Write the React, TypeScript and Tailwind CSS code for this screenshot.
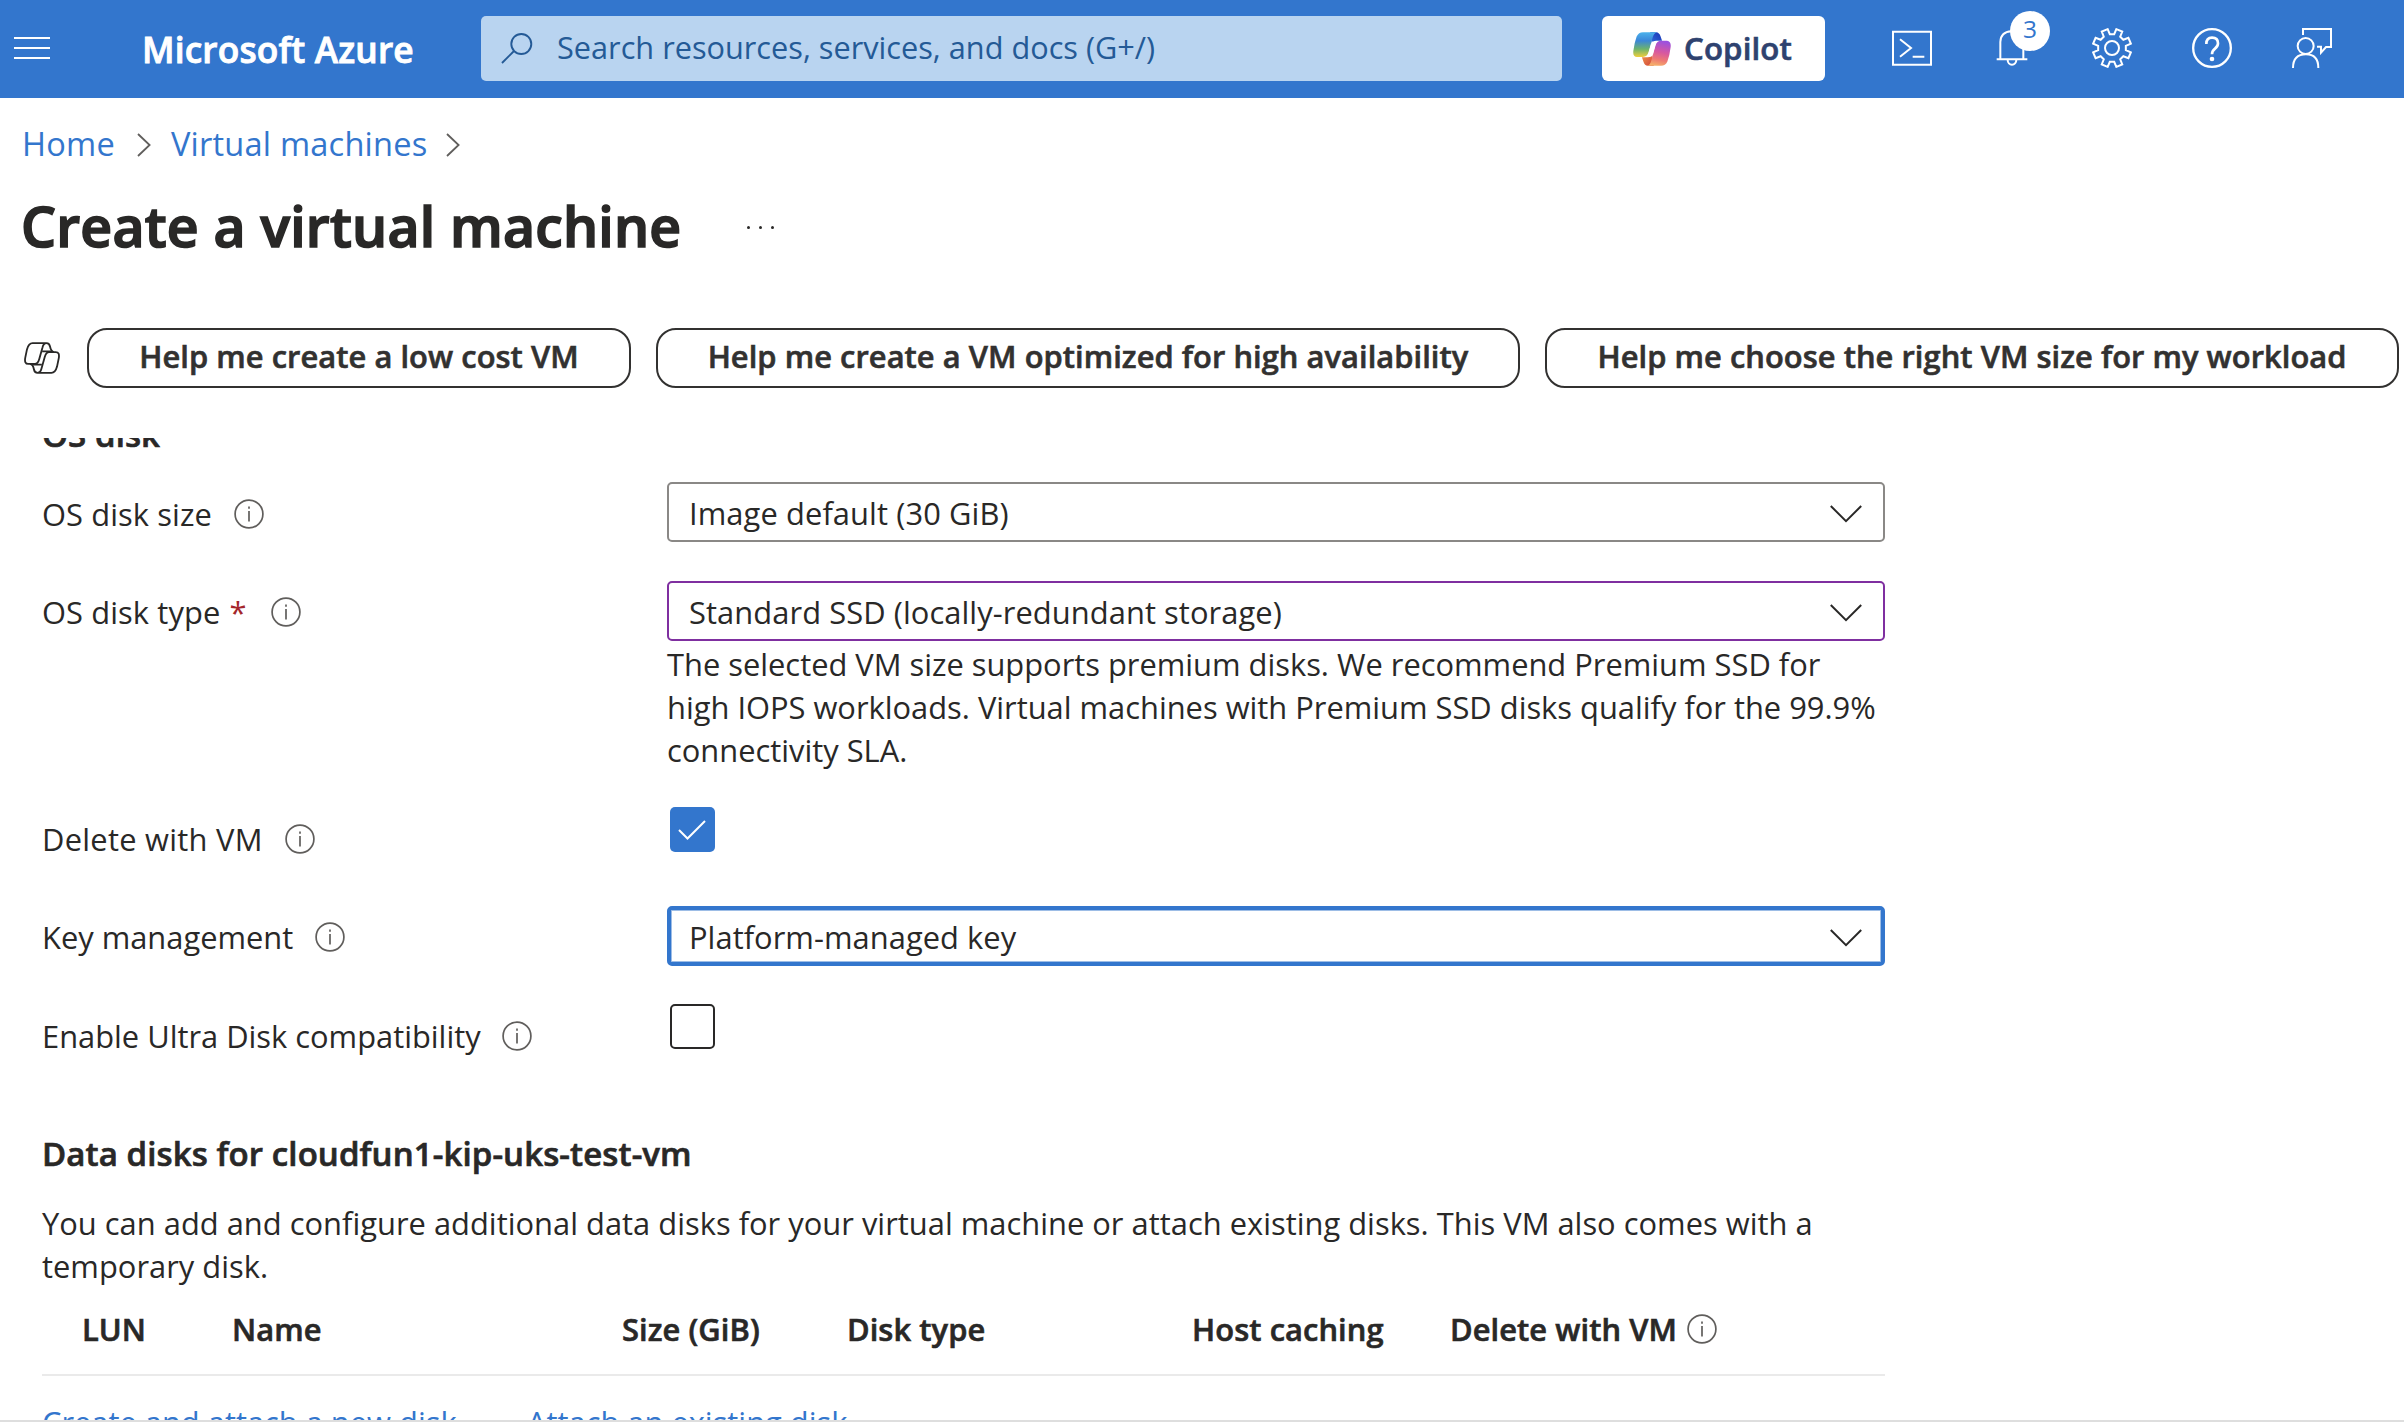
import type { ReactNode } from "react";

const gearPath = (() => {
  const point = (deg: number, r: number) => {
    const a = ((deg - 90) * Math.PI) / 180;
    return `${(60 + r * Math.cos(a)).toFixed(1)} ${(60 + r * Math.sin(a)).toFixed(1)}`;
  };
  const parts: string[] = [];
  for (let k = 0; k < 8; k++) {
    const a = k * 45;
    parts.push(point(a - 13, 58), point(a - 9, 42), point(a + 9, 42), point(a + 13, 58));
  }
  return `M${parts.join("L")}Z`;
})();

function HeaderIcon({ children }: { children: ReactNode }) {
  return (
    <button className="relative mt-3 flex h-10 w-[100px] shrink-0 justify-center">
      {children}
    </button>
  );
}

function Glyph({ children }: { children: ReactNode }) {
  return (
    <svg className="size-10" viewBox="0 0 120 120" fill="none" stroke="#fff" strokeWidth="6">
      {children}
    </svg>
  );
}

function CopilotLogo() {
  return (
    <svg className="h-[34px] w-[38px]" viewBox="98 63 115 102">
      <defs>
        <linearGradient id="cpLeft" x1="0" y1="0" x2="0" y2="1">
          <stop offset="0" stopColor="#4cb3ec" />
          <stop offset="0.35" stopColor="#3b86d8" />
          <stop offset="0.68" stopColor="#6db36c" />
          <stop offset="1" stopColor="#efcf3c" />
        </linearGradient>
        <linearGradient id="cpRight" x1="0.6" y1="0" x2="0.4" y2="1">
          <stop offset="0" stopColor="#9a51e0" />
          <stop offset="0.45" stopColor="#d8589f" />
          <stop offset="0.75" stopColor="#ee7a73" />
          <stop offset="1" stopColor="#f5b06a" />
        </linearGradient>
        <linearGradient id="cpTop" x1="0" y1="1" x2="1" y2="0">
          <stop offset="0" stopColor="#2f6fdc" />
          <stop offset="1" stopColor="#1a32b4" />
        </linearGradient>
        <linearGradient id="cpBottom" x1="0" y1="0" x2="1" y2="1">
          <stop offset="0" stopColor="#f0984a" />
          <stop offset="1" stopColor="#cf3f3a" />
        </linearGradient>
      </defs>
      <path d="M150 63H168Q178 64 181 75L186 89H168Q158 90 155 99Z" fill="url(#cpTop)" />
      <path d="M161 165H143Q133 164 130 153L125 139H143Q153 138 156 129Z" fill="url(#cpBottom)" />
      <path d="M128 63H170Q161 66 158 78L145 124Q141 138 128 138H110Q97 137 99 120Q102 95 109 76Q115 63 128 63Z" fill="url(#cpLeft)" />
      <path d="M183 165H141Q150 162 153 150L166 104Q170 89 183 89H201Q214 91 212 108Q209 133 202 152Q196 165 183 165Z" fill="url(#cpRight)" />
      <path d="M156 91H171Q167 95 165 104L157 133Q155 138 148 138H140Q143 133 145 126L153 98Z" fill="#fff" />
    </svg>
  );
}

function CopilotOutline() {
  return (
    <svg className="h-8 w-9 shrink-0" viewBox="42 66 109 96" fill="none" stroke="#292827" strokeWidth="5.5">
      <path d="M110 69H68Q56 69 51 88L46 112Q42 132 55 132H75Q84 132 88 118L98 82Q101 69 110 69Q119 69 121 80Q124 95 133 96" />
      <path d="M83 159H125Q137 159 142 140L147 116Q151 96 138 96H118Q109 96 105 110L95 146Q92 159 83 159Q74 159 72 148Q69 133 60 132" />
      <path d="M97 94H126M67 134H96" />
    </svg>
  );
}

function Info() {
  return (
    <svg className="size-[30px] shrink-0" viewBox="0 0 30 30" fill="none" stroke="#605e5c" strokeWidth="1.7">
      <circle cx="15" cy="15" r="13.9" />
      <path d="M15 12v10.5M15 7.6v2.2" />
    </svg>
  );
}

function Crumb() {
  return (
    <svg className="mt-0.5 h-6 w-3.5 shrink-0" viewBox="0 0 14 24" fill="none" stroke="#605e5c" strokeWidth="1.8">
      <path d="M1 1L12.6 12L1 23" />
    </svg>
  );
}

function Select({ value, tone }: { value: string; tone: string }) {
  return (
    <div className={`flex h-[60px] w-[1218px] items-center justify-between rounded-[5px] ${tone}`}>
      <span className="pt-0.5">{value}</span>
      <svg className="mt-[3px] h-[18px] w-8" viewBox="0 0 32 18" fill="none" stroke="#292827" strokeWidth="2">
        <path d="M0.8 1L16 16.2L31.2 1" />
      </svg>
    </div>
  );
}

function Row({ label, required, offset, className, children }: {
  label: string;
  required?: boolean;
  offset: string;
  className: string;
  children: ReactNode;
}) {
  return (
    <div className={`flex shrink-0 items-start ${className}`}>
      <div className={`flex w-[625px] shrink-0 items-center leading-[44px] ${offset}`}>
        <span>
          {label}
          {required && <span className="ml-[1px] text-[#a4262c]"> *</span>}
        </span>
        <Info />
      </div>
      {children}
    </div>
  );
}

export default function App() {
  return (
    <div className="flex h-[1422px] w-[2404px] flex-col overflow-hidden border-b-2 border-[#dedede] bg-white font-['Open_Sans',sans-serif] text-[30.85px] text-[#292827]">
      <header className="flex h-[98px] shrink-0 items-start bg-[#3376cd] pt-4">
        <button className="mt-[21px] ml-3.5 flex w-9 shrink-0 flex-col gap-2">
          <span className="h-0.5 bg-white" />
          <span className="h-0.5 bg-white" />
          <span className="h-0.5 bg-white" />
        </button>
        <div className="ml-[92px] w-[339px] shrink-0 text-[35.3px] leading-[67px] font-semibold tracking-[0.15px] whitespace-nowrap text-white [-webkit-text-stroke:0.025em]">
          Microsoft Azure
        </div>
        <div className="flex h-[65px] w-[1081px] shrink-0 items-center rounded-[5px] bg-[#b9d4f0] pl-5">
          <svg className="h-[31px] w-8" viewBox="0 0 32 31" fill="none" stroke="#245a96" strokeWidth="1.9">
            <circle cx="20.3" cy="11" r="10" />
            <path d="M13 18L1 30" />
          </svg>
          <span className="ml-6 pb-[3px] text-[30.7px] leading-[62px] text-[#245a96]">
            Search resources, services, and docs (G+/)
          </span>
        </div>
        <button className="ml-10 flex h-[65px] w-[223px] shrink-0 items-center rounded-md bg-white pl-[31px] text-[#2e426f]">
          <CopilotLogo />
          <span className="ml-[13px] pb-0.5 text-[31.2px] leading-[62px] font-semibold tracking-[0.15px] [-webkit-text-stroke:0.02em]">
            Copilot
          </span>
        </button>
        <nav className="ml-[37px] flex">
          <HeaderIcon>
            <Glyph>
              <path d="M3 11H117V110H3ZM24 34L57 60L24 86M62 86H97" />
            </Glyph>
          </HeaderIcon>
          <HeaderIcon>
            <Glyph>
              <path d="M25 94V42Q26 12 58 10Q92 12 94 42V94M14 94H106M47 96a12 13 0 0 0 26 0" />
            </Glyph>
            <span className="absolute -top-[17px] left-12 flex size-10 items-center justify-center rounded-full bg-white pb-1 text-[24.5px] leading-none text-[#3376cd]">
              3
            </span>
          </HeaderIcon>
          <HeaderIcon>
            <Glyph>
              <path d={gearPath} />
              <circle cx="60" cy="60" r="21" />
            </Glyph>
          </HeaderIcon>
          <HeaderIcon>
            <Glyph>
              <circle cx="60" cy="60" r="56.5" strokeWidth="7" />
              <path d="M43 48Q43 29 60 29Q78 29 78 46Q78 55 69 62Q60 69 60 79" strokeWidth="8" />
              <circle cx="60" cy="93" r="7" fill="#fff" stroke="none" />
            </Glyph>
          </HeaderIcon>
          <HeaderIcon>
            <Glyph>
              <circle cx="41" cy="54" r="24" />
              <path d="M3 120Q3 79 42 79Q79 79 79 120M33 21V3H117V57H102L87 74V56H75" />
            </Glyph>
          </HeaderIcon>
        </nav>
      </header>

      <nav className="mt-6 flex h-11 shrink-0 items-center pl-[22px] text-[32.6px] leading-[44px] tracking-[0.2px] text-[#3376cd]">
        <a className="w-[115px]">Home</a>
        <Crumb />
        <a className="ml-5 w-[275px]">Virtual machines</a>
        <Crumb />
      </nav>

      <div className="mt-5 flex h-20 shrink-0 items-center pl-[21px]">
        <h1 className="w-[726px] text-[55.3px] leading-[80px] font-semibold tracking-[0.23px] [-webkit-text-stroke:0.03em]">
          Create a virtual machine
        </h1>
        <div className="flex gap-[9px] pt-0.5">
          <span className="size-[3px] rounded-full bg-[#292827]" />
          <span className="size-[3px] rounded-full bg-[#292827]" />
          <span className="size-[3px] rounded-full bg-[#292827]" />
        </div>
      </div>

      <div className="mt-[62px] flex h-[60px] shrink-0 items-center pl-6 leading-[52px] font-semibold tracking-[0.06px] whitespace-nowrap text-[#323130] [-webkit-text-stroke:0.02em]">
        <CopilotOutline />
        <button className="ml-[27px] h-[60px] w-[544px] rounded-[20px] border-2 border-[#323130] pb-1">
          Help me create a low cost VM
        </button>
        <button className="ml-[25px] h-[60px] w-[864px] rounded-[20px] border-2 border-[#323130] pb-1">
          Help me create a VM optimized for high availability
        </button>
        <button className="ml-[25px] h-[60px] w-[854px] rounded-[20px] border-2 border-[#323130] pb-1">
          Help me choose the right VM size for my workload
        </button>
      </div>

      <main className="mt-[50px] flex min-h-0 flex-1 flex-col overflow-hidden pl-[42px]">
        <h2 className="-mt-[25px] shrink-0 text-[33px] leading-[44px] font-semibold tracking-[0.1px] [-webkit-text-stroke:0.02em]">
          OS disk
        </h2>

        <Row className="mt-[25px]" label="OS disk size" offset="pt-2.5 gap-[22px] tracking-[0.1px]">
          <Select value="Image default (30 GiB)" tone="border-2 border-[#8a8886] pl-5 pr-[21px] tracking-[0.1px]" />
        </Row>

        <Row className="mt-[39px]" label="OS disk type" required offset="pt-[9px] gap-6 tracking-[0.1px]">
          <div className="w-[1218px]">
            <Select
              value="Standard SSD (locally-redundant storage)"
              tone="border-2 border-[#7f2fa0] pl-5 pr-[21px] tracking-[0.08px]"
            />
            <p className="mt-0.5 leading-[43px] whitespace-nowrap">
              The selected VM size supports premium disks. We recommend Premium SSD for
              <br />
              high IOPS workloads. Virtual machines with Premium SSD disks qualify for the 99.9%
              <br />
              connectivity SLA.
            </p>
          </div>
        </Row>

        <Row className="mt-[35px] h-[60px]" label="Delete with VM" offset="pt-2.5 gap-[22px] tracking-[0.28px]">
          <span className="ml-[3px] flex size-[45px] items-center justify-center rounded-[5px] bg-[#3376cd] pr-0.5">
            <svg className="h-5 w-7" viewBox="0 0 28 20" fill="none" stroke="#fff" strokeWidth="2">
              <path d="M1 10L9.5 18.5L27 1" />
            </svg>
          </span>
        </Row>

        <Row className="mt-[39px]" label="Key management" offset="pt-[9px] gap-[22px]">
          <Select
            value="Platform-managed key"
            tone="border-4 border-[#3376cd] pl-[18px] pr-[19px] tracking-[0.05px] ring-1 ring-inset ring-[#9dbde6]"
          />
        </Row>

        <Row className="mt-[38px] h-[60px]" label="Enable Ultra Disk compatibility" offset="pt-2.5 gap-[21px]">
          <span className="ml-[3px] size-[45px] rounded-[5px] border-2 border-[#292827]" />
        </Row>

        <h2 className="mt-[68px] shrink-0 text-[33px] leading-[44px] font-semibold tracking-[0.1px] [-webkit-text-stroke:0.02em]">
          Data disks for cloudfun1-kip-uks-test-vm
        </h2>
        <p className="mt-[26px] shrink-0 leading-[43px] tracking-[0.02px] whitespace-nowrap">
          You can add and configure additional data disks for your virtual machine or attach existing disks. This VM also comes with a
          <br />
          temporary disk.
        </p>

        <div className="mt-[19px] flex h-[69px] w-[1843px] shrink-0 items-start border-b-2 border-[#eaeaea] pl-10 leading-[44px] font-semibold tracking-[0.08px] whitespace-nowrap [-webkit-text-stroke:0.02em]">
          <span className="w-[150px]">LUN</span>
          <span className="w-[390px]">Name</span>
          <span className="w-[225px]">Size (GiB)</span>
          <span className="w-[345px]">Disk type</span>
          <span className="w-[258px]">Host caching</span>
          <span className="flex items-center gap-2.5">
            Delete with VM
            <Info />
          </span>
        </div>

        <div className="mt-[25px] flex shrink-0 leading-[43px] whitespace-nowrap text-[#3376cd]">
          <a className="w-[485px]">Create and attach a new disk</a>
          <a>Attach an existing disk</a>
        </div>
      </main>
    </div>
  );
}
